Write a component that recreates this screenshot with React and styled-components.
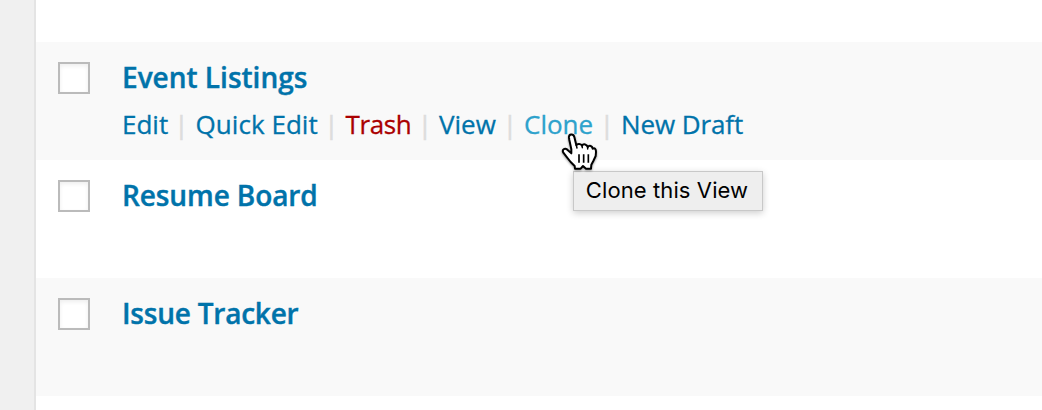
import React from 'react';
import styled, { createGlobalStyle } from 'styled-components';

const Global = createGlobalStyle`
  body { margin: 0; background: #f0f0f0; font-family: "Open Sans", sans-serif; overflow: hidden; }
  * { box-sizing: border-box; }
`;
const Page = styled.div`
  height: 410px;
  padding-left: 34px;
  overflow: hidden;
  background: #f0f0f0;
`;
const Table = styled.main`
  height: 410px;
  border-left: 2px solid #e4e4e4;
  background: #fff;
  padding-top: 42px;
`;
const Row = styled.div`
  height: 118px;
  display: flex;
  gap: 32px;
  padding: 20px 22px 0;
  background: ${p => (p.$shaded ? '#f9f9f9' : '#fff')};
`;
const Checkbox = styled.span`
  width: 32px;
  height: 32px;
  flex: none;
  border: 2px solid #bbb;
  background: #fff;
  box-shadow: inset 0 2px 4px rgba(0, 0, 0, 0.07);
`;
const Title = styled.a`
  display: block;
  margin-top: -1px;
  font-size: 28px;
  font-weight: 600;
  line-height: 32px;
  letter-spacing: ${p => p.$tracking || '0'};
  color: #0073aa;
  -webkit-text-stroke: 0.4px currentColor;
  white-space: nowrap;
`;
const Actions = styled.div`
  display: flex;
  margin-top: 13px;
  font-size: 26px;
  line-height: 36px;
  white-space: nowrap;
`;
const Action = styled.span`
  position: relative;
  width: ${p => p.$width}px;
  letter-spacing: ${p => p.$tracking || '0'};
  color: ${p => p.$color || '#0073aa'};
  -webkit-text-stroke: 0.3px currentColor;
`;
const Divider = styled.span`
  width: 28px;
  text-align: center;
  color: #ddd;
  -webkit-text-stroke: 0.6px currentColor;
`;
const Cursor = styled.svg`
  position: absolute;
  left: 31px;
  top: 22px;
  z-index: 2;
  filter: drop-shadow(0 1px 1px rgba(0, 0, 0, 0.4));
`;
const Tooltip = styled.span`
  position: absolute;
  left: 49px;
  top: 65px;
  width: 190px;
  height: 40px;
  padding-right: 2px;
  border: 1px solid #c8c8c8;
  background: #eee;
  box-shadow: 0 2px 7px rgba(0, 0, 0, 0.2);
  color: #000;
  font: 22px/37px Inter, sans-serif;
  letter-spacing: 0.1px;
  -webkit-text-stroke: 0;
  text-align: center;
`;

function PointerHand() {
  return (
    <Cursor width="50" height="50" viewBox="0 0 150 150">
      <path
        d="M60 122L59 114L47 102L36 88L25 74C20 65 29 59 37 65L49 76L49 64L43 36L42 29C41 17 55 16 58 27L64 52C67 46 78 47 81 53C85 46 96 49 98 57C103 51 112 53 113 62C120 59 123 64 123 72L122 84L115 99L109 110L108 122L93 122L84 114L77 122Z"
        fill="#fff"
        stroke="#000"
        strokeWidth="6"
        strokeLinejoin="round"
      />
      <path d="M64 52L66 60M81 53L82 59M98 57V63" stroke="#000" strokeWidth="4.5" strokeLinecap="round" />
      <path d="M72 79V104M86 79V104M100 79V104" stroke="#000" strokeWidth="5" />
    </Cursor>
  );
}

export default function App() {
  return (
    <Page>
      <Global />
      <Table>
        <Row $shaded>
          <Checkbox />
          <div>
            <Title>Event Listings</Title>
            <Actions>
              <Action $width={45.5}>Edit</Action><Divider>|</Divider>
              <Action $width={122} $tracking="0.05px">Quick Edit</Action><Divider>|</Divider>
              <Action $width={65.5} $tracking="-0.4px" $color="#a00">Trash</Action><Divider>|</Divider>
              <Action $width={57}>View</Action><Divider>|</Divider>
              <Action $width={69} $color="#2ea2cc">
                Clone
                <PointerHand />
                <Tooltip>Clone this View</Tooltip>
              </Action><Divider>|</Divider>
              <Action $tracking="-0.1px">New Draft</Action>
            </Actions>
          </div>
        </Row>
        <Row><Checkbox /><Title $tracking="-0.1px">Resume Board</Title></Row>
        <Row $shaded><Checkbox /><Title $tracking="-0.22px">Issue Tracker</Title></Row>
      </Table>
    </Page>
  );
}
